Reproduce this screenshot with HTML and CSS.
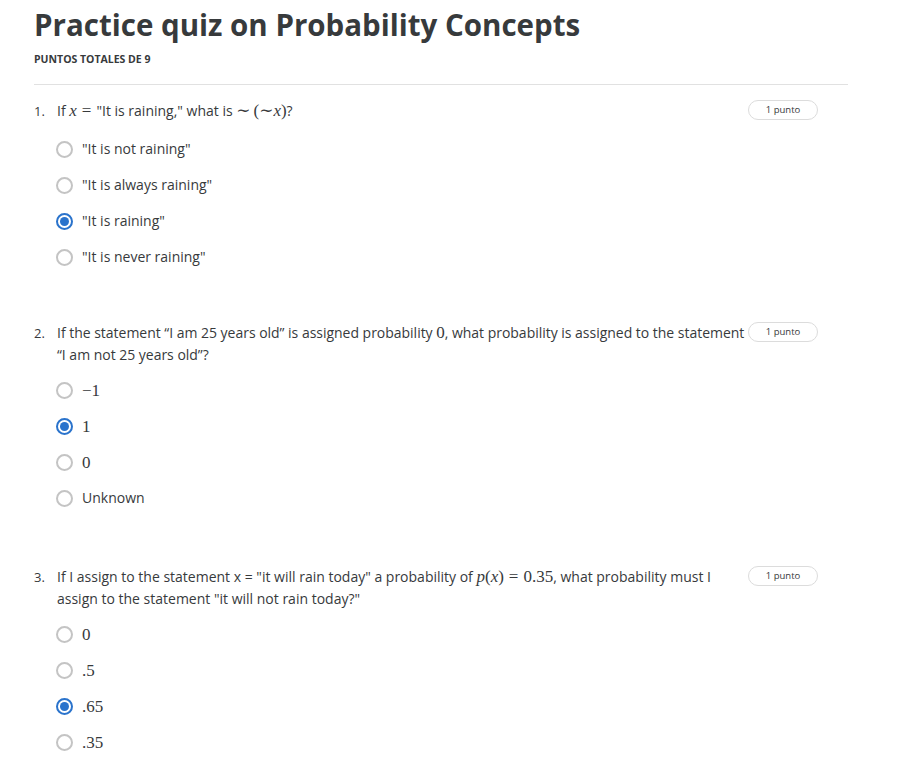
FILE: index.html
```html
<!DOCTYPE html>
<html lang="es">
<head>
<meta charset="utf-8">
<title>Practice quiz on Probability Concepts</title>
<link rel="stylesheet" href="styles.css">
</head>
<body>
<main class="quiz">
  <header class="quiz-header">
    <h1 class="quiz-title">Practice quiz on Probability Concepts</h1>
    <div class="quiz-total">PUNTOS TOTALES DE 9</div>
  </header>

  <section class="question">
    <div class="q-row">
      <span class="q-num">1.</span>
      <div class="q-text">If <span class="mi">x</span><span class="mo rel">=</span>"It is raining," what is <span class="mo">∼</span><span class="mo op">(∼</span><span class="mi">x</span><span class="mo">)</span>?</div>
      <span class="badge">1 punto</span>
    </div>
    <ul class="options options-tall">
      <li class="opt"><span class="radio"></span><span>"It is not raining"</span></li>
      <li class="opt"><span class="radio"></span><span>"It is always raining"</span></li>
      <li class="opt"><span class="radio checked"></span><span>"It is raining"</span></li>
      <li class="opt"><span class="radio"></span><span>"It is never raining"</span></li>
    </ul>
  </section>

  <section class="question">
    <div class="q-row">
      <span class="q-num">2.</span>
      <div class="q-text q-text-wide">If the statement “I am 25 years old” is assigned probability <span class="mn">0</span>, what probability is assigned to the statement “I am not 25 years old”?</div>
      <span class="badge">1 punto</span>
    </div>
    <ul class="options">
      <li class="opt"><span class="radio"></span><span class="mn">−1</span></li>
      <li class="opt"><span class="radio checked"></span><span class="mn">1</span></li>
      <li class="opt"><span class="radio"></span><span class="mn">0</span></li>
      <li class="opt"><span class="radio"></span><span>Unknown</span></li>
    </ul>
  </section>

  <section class="question question-tall">
    <div class="q-row">
      <span class="q-num">3.</span>
      <div class="q-text">If I assign to the statement x = "it will rain today" a probability of <span class="mi">p</span><span class="mo">(</span><span class="mi">x</span><span class="mo">)</span><span class="mo rel">=</span><span class="mn">0.35</span>, what probability must I assign to the statement "it will not rain today?"</div>
      <span class="badge">1 punto</span>
    </div>
    <ul class="options">
      <li class="opt"><span class="radio"></span><span class="mn">0</span></li>
      <li class="opt"><span class="radio"></span><span class="mn">.5</span></li>
      <li class="opt"><span class="radio checked"></span><span class="mn">.65</span></li>
      <li class="opt"><span class="radio"></span><span class="mn">.35</span></li>
    </ul>
  </section>
</main>
</body>
</html>
```

FILE: styles.css
```css
* { box-sizing: border-box; }
html, body { margin: 0; padding: 0; background: #fff; }
body {
  font-family: "Open Sans", "Noto Sans", sans-serif;
  color: #373a3c;
  font-size: 14px;
}
.quiz {
  width: 848px;
  padding: 6px 0 0 34px;
}
.quiz-header {
  border-bottom: 1px solid #e1e1e1;
  padding-bottom: 19px;
}
.quiz-title {
  margin: 0;
  font-size: 29.5px;
  font-weight: 700;
  line-height: 38px;
  color: #373a3c;
}
.quiz-total {
  margin-top: 9px;
  font-size: 10.5px;
  font-weight: 700;
  line-height: 12px;
  color: #373a3c;
}
.question {
  padding-top: 15px;
  padding-bottom: 39px;
}
.question-tall {
  padding-top: 18px;
}
.q-row {
  display: flex;
  align-items: flex-start;
  margin-right: 30px;
}
.q-num {
  width: 23px;
  flex: none;
  font-size: 13px;
  line-height: 22px;
}
.q-text {
  flex: 1;
  line-height: 22px;
  margin-right: 10px;
}
.q-text-wide {
  margin-right: -6px;
  letter-spacing: -0.02px;
}
.badge {
  flex: none;
  margin-top: 0;
  width: 70px;
  height: 20px;
  border: 1px solid #dcdcdc;
  border-radius: 10px;
  font-size: 9.5px;
  line-height: 18px;
  text-align: center;
  color: #373a3c;
  background: #fff;
  position: relative;
}
.mi {
  font-family: "Liberation Serif", "DejaVu Serif", serif;
  font-style: italic;
  font-size: 17px;
  line-height: 1;
}
.mo, .mn {
  font-family: "Liberation Serif", "DejaVu Serif", serif;
  font-size: 17px;
  line-height: 1;
}
.mo.rel {
  margin: 0 5px;
}
.mo.op {
  margin-left: 3px;
}
.options {
  list-style: none;
  margin: 13px 0 0 22px;
  padding: 0;
  display: flex;
  flex-direction: column;
  gap: 14px;
}
.options-tall {
  margin-top: 16px;
}
.opt {
  display: flex;
  align-items: center;
  gap: 9px;
  height: 22px;
  line-height: 22px;
}
.radio {
  width: 17px;
  height: 17px;
  border: 2px solid #c4c4c4;
  border-radius: 50%;
  flex: none;
  position: relative;
}
.radio.checked {
  border-color: #2a73cc;
}
.radio.checked::after {
  content: "";
  position: absolute;
  left: 2px;
  top: 2px;
  width: 9px;
  height: 9px;
  border-radius: 50%;
  background: #2a73cc;
}
```
